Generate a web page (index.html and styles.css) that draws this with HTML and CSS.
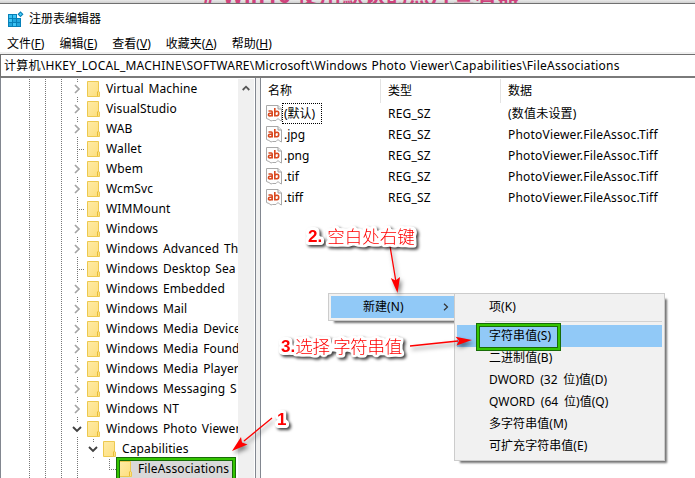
FILE: index.html
```html
<!DOCTYPE html>
<html lang="zh-CN">
<head>
<meta charset="utf-8">
<title>注册表编辑器</title>
<link rel="stylesheet" href="styles.css">
</head>
<body>
<svg class="defs" width="0" height="0" aria-hidden="true">
  <filter id="outline" x="-10" y="-10" width="160" height="44" filterUnits="userSpaceOnUse" color-interpolation-filters="sRGB">
    <feMorphology in="SourceAlpha" operator="dilate" radius="2"/>
    <feGaussianBlur stdDeviation="1"/>
    <feColorMatrix values="0 0 0 0 1  0 0 0 0 1  0 0 0 0 1  0 0 0 5 -.6" result="halo"/>
    <feMerge><feMergeNode in="halo"/><feMergeNode in="SourceGraphic"/></feMerge>
  </filter>
  <linearGradient id="fold" x1="0" y1="0" x2="1" y2="1"><stop offset="0" stop-color="#ffeba6"/><stop offset="1" stop-color="#fddf7c"/></linearGradient>
  <symbol id="folder" viewBox="0 0 13 16"><path d="M.5.5h11v10l1 .5v4.500H.5z" fill="url(#fold)" stroke="#edc94f"/><path d="M10.500 15v-4l1-1" fill="none" stroke="#e7bd38"/></symbol>
  <symbol id="right" viewBox="0 0 8 10"><path d="M2 1l4 4-4 4" fill="none" stroke="#a3a3a3" stroke-width="1.700"/></symbol>
  <symbol id="down" viewBox="0 0 10 8"><path d="M1 2l4 4 4-4" fill="none" stroke="#404040" stroke-width="1.900"/></symbol>
  <symbol id="ab" viewBox="0 0 16 17"><path d="M.5.500H12l3.500 3.500v12l-2-1-1.500-1.500-2 2H6.500L5 16l-2-1.500-2.500-1z" fill="#fdfdfd" stroke="#a9a9a9"/><path d="M12 .5V4h3.500" fill="#eee" stroke="#a0a0a0"/><g fill="none" stroke="#d9481f" stroke-width="1.600"><path d="M2.500 6h2.700q1 0 1 1v4.500M6 8.300H4q-1.500 0-1.500 1.400T4 11q1.200 0 2-1"/><path d="M8.800 3v8.500M9 7.300q.8-1 2-1 1.700 0 1.700 2.200T11 10.800q-1.200 0-2-.7"/></g></symbol>
</svg>
<div class="backdrop"><span># Win10 使用默认的照片查看器</span></div>
<div class="window">
  <header class="titlebar">
    <svg width="16" height="17" viewBox="0 0 16 17"><path d="M0 3h9v4h4v9H0z" fill="#0780b8"/><path d="M1 4h3v3H1zM5 4h3v3H5zM1 8h3v3H1zM5 12h3v3H5z" fill="#3ec4f4"/><path d="M5 8h3v3H5zM9 8h3v3H9zM1 12h3v3H1zM9 12h3v3H9z" fill="#22a6dd"/><path d="M12.500.2l3 3-3 3-3-3z" fill="#087eb5"/><path d="M12.500 1.800l1.500 1.500-1.500 1.500L11 3.300z" fill="#4bd0fa"/></svg>
    <span>注册表编辑器</span>
  </header>
  <nav class="menubar"><span>文件(<u>F</u>)</span><span>编辑(<u>E</u>)</span><span>查看(<u>V</u>)</span><span>收藏夹(<u>A</u>)</span><span>帮助(<u>H</u>)</span></nav>
  <div class="address"><span>计算机\HKEY_LOCAL_MACHINE\SOFTWARE\Microsoft\Windows Photo Viewer\Capabilities\FileAssociations</span></div>
  <main class="panes">
    <section class="tree">
      <div class="rows">
        <div class="row"><i></i><i></i><i></i><b><svg class="r"><use href="#right"/></svg></b><svg class="f"><use href="#folder"/></svg><span>Virtual Machine</span></div>
        <div class="row"><i></i><i></i><i></i><b><svg class="r"><use href="#right"/></svg></b><svg class="f"><use href="#folder"/></svg><span>VisualStudio</span></div>
        <div class="row"><i></i><i></i><i></i><b><svg class="r"><use href="#right"/></svg></b><svg class="f"><use href="#folder"/></svg><span>WAB</span></div>
        <div class="row"><i></i><i></i><i></i><i class="tee"></i><svg class="f"><use href="#folder"/></svg><span>Wallet</span></div>
        <div class="row"><i></i><i></i><i></i><b><svg class="r"><use href="#right"/></svg></b><svg class="f"><use href="#folder"/></svg><span>Wbem</span></div>
        <div class="row"><i></i><i></i><i></i><b><svg class="r"><use href="#right"/></svg></b><svg class="f"><use href="#folder"/></svg><span>WcmSvc</span></div>
        <div class="row"><i></i><i></i><i></i><i class="tee"></i><svg class="f"><use href="#folder"/></svg><span>WIMMount</span></div>
        <div class="row"><i></i><i></i><i></i><b><svg class="r"><use href="#right"/></svg></b><svg class="f"><use href="#folder"/></svg><span>Windows</span></div>
        <div class="row"><i></i><i></i><i></i><b><svg class="r"><use href="#right"/></svg></b><svg class="f"><use href="#folder"/></svg><span>Windows Advanced Th</span></div>
        <div class="row"><i></i><i></i><i></i><i class="tee"></i><svg class="f"><use href="#folder"/></svg><span>Windows Desktop Sea</span></div>
        <div class="row"><i></i><i></i><i></i><b><svg class="r"><use href="#right"/></svg></b><svg class="f"><use href="#folder"/></svg><span>Windows Embedded</span></div>
        <div class="row"><i></i><i></i><i></i><b><svg class="r"><use href="#right"/></svg></b><svg class="f"><use href="#folder"/></svg><span>Windows Mail</span></div>
        <div class="row"><i></i><i></i><i></i><b><svg class="r"><use href="#right"/></svg></b><svg class="f"><use href="#folder"/></svg><span>Windows Media Device</span></div>
        <div class="row"><i></i><i></i><i></i><b><svg class="r"><use href="#right"/></svg></b><svg class="f"><use href="#folder"/></svg><span>Windows Media Found</span></div>
        <div class="row"><i></i><i></i><i></i><b><svg class="r"><use href="#right"/></svg></b><svg class="f"><use href="#folder"/></svg><span>Windows Media Player</span></div>
        <div class="row"><i></i><i></i><i></i><b><svg class="r"><use href="#right"/></svg></b><svg class="f"><use href="#folder"/></svg><span>Windows Messaging S</span></div>
        <div class="row"><i></i><i></i><i></i><b><svg class="r"><use href="#right"/></svg></b><svg class="f"><use href="#folder"/></svg><span>Windows NT</span></div>
        <div class="row"><i></i><i></i><i></i><b><svg class="d"><use href="#down"/></svg></b><svg class="f"><use href="#folder"/></svg><span>Windows Photo Viewer</span></div>
        <div class="row"><i></i><i></i><i></i><i></i><b class="first"><svg class="d"><use href="#down"/></svg></b><svg class="f"><use href="#folder"/></svg><span>Capabilities</span></div>
        <div class="row selected"><i></i><i></i><i></i><i></i><i class="none"></i><i class="elbow"></i><svg class="f"><use href="#folder"/></svg><span>FileAssociations</span></div>
      </div>
      <div class="scroll"><svg width="8" height="6" viewBox="0 0 8 6"><path d="M.7 5L4 1.700 7.300 5" fill="none" stroke="#555" stroke-width="1.800"/></svg></div>
    </section>
    <section class="list">
      <div class="line head"><span>名称</span><span>类型</span><span>数据</span></div>
      <div class="line"><div class="name"><svg><use href="#ab"/></svg><span class="focus">(默认)</span></div><span>REG_SZ</span><span>(数值未设置)</span></div>
      <div class="line"><div class="name"><svg><use href="#ab"/></svg><span>.jpg</span></div><span>REG_SZ</span><span>PhotoViewer.FileAssoc.Tiff</span></div>
      <div class="line"><div class="name"><svg><use href="#ab"/></svg><span>.png</span></div><span>REG_SZ</span><span>PhotoViewer.FileAssoc.Tiff</span></div>
      <div class="line"><div class="name"><svg><use href="#ab"/></svg><span>.tif</span></div><span>REG_SZ</span><span>PhotoViewer.FileAssoc.Tiff</span></div>
      <div class="line"><div class="name"><svg><use href="#ab"/></svg><span>.tiff</span></div><span>REG_SZ</span><span>PhotoViewer.FileAssoc.Tiff</span></div>
    </section>
  </main>
</div>
<div class="popup parent"><div class="item active"><span>新建(N)</span><svg width="6" height="8" viewBox="0 0 6 8"><path d="M1 .7L4.500 4 1 7.300" fill="none" stroke="#333" stroke-width="1.200"/></svg></div></div>
<div class="popup sub">
  <div class="item">项(K)</div>
  <hr>
  <div class="item active">字符串值(S)</div>
  <div class="item">二进制值(B)</div>
  <div class="item">DWORD (32 位)值(D)</div>
  <div class="item">QWORD (64 位)值(Q)</div>
  <div class="item">多字符串值(M)</div>
  <div class="item">可扩充字符串值(E)</div>
</div>
<div class="mark mark-key"></div>
<div class="mark mark-item"></div>
<svg class="arrows" width="695" height="478" viewBox="0 0 695 478">
  <g fill="#f00" stroke="#f00"><path d="M390 246l6 36M410 346l48-5M272 418l-28 23" fill="none" stroke-width="1.300"/><path stroke="none" d="M397.500 293l-6.700-15 4.700 2.500 4.500-3.500zM472 340l-15.500 5.500 2.500-4.700-3.500-4zM232 451l9-14 1 5.500 5.500 2z"/></g>
</svg>
<div class="note n1"><b>1</b></div>
<div class="note n2"><b>2.</b><span>空白处右键</span></div>
<div class="note n3"><b>3.</b><span>选择 字符串值</span></div>
</body>
</html>
```
FILE: styles.css
```css
* { box-sizing: border-box; }
body {
  margin: 0; width: 695px; height: 478px; overflow: hidden; position: relative;
  display: flex; flex-direction: column; background: #fff; color: #000;
  font: 12px/20px "Noto Sans", "Noto Sans CJK SC", sans-serif;
  white-space: nowrap;
}
svg { display: block; flex: none; }
.defs { position: absolute; }
.backdrop { height: 3px; flex: none; overflow: hidden; background: linear-gradient(#e9e9e9, #cfcfcf); padding-left: 202px; }
.backdrop span { display: block; margin-top: -17px; font-size: 22px; font-weight: 700; line-height: 22px; letter-spacing: .25px; color: #cf437c; }
.window { flex: 1; min-height: 0; display: flex; flex-direction: column; border-top: 1px solid #707070; }
.titlebar { height: 29px; flex: none; display: flex; align-items: center; gap: 5px; padding: 1px 0 0 8px; }
.menubar { height: 21px; flex: none; display: flex; gap: 15px; padding: 1px 0 0 7px; }
.menubar u { text-underline-offset: 1px; }
.address { height: 24px; flex: none; border: 1px solid #6f6f6f; border-right: 0; border-bottom: 2px solid #7a7a7a; padding: 1px 0 0 3px; letter-spacing: .24px; word-spacing: .6px; box-shadow: 0 -2px #f0f0f0; }
.panes { flex: 1; min-height: 0; display: flex; gap: 4px; background: #f0f0f0; }
.tree { width: 256px; display: flex; background: #fff; border-left: 1px solid #828790; border-right: 1px solid #828790; padding-top: 1px; }
.rows { width: 237px; overflow: hidden; padding-left: 20px; letter-spacing: .13px; word-spacing: 1.500px; }
.row { height: 20px; display: flex; align-items: center; }
.row i, .row b { width: 16px; height: 20px; flex: none; }
.row i { background: repeating-linear-gradient(#777 0 1px, transparent 1px 2px) 8px 0 / 1px 20px no-repeat; }
.row i.tee { background: repeating-linear-gradient(#777 0 1px, transparent 1px 2px) 8px 0 / 1px 20px no-repeat, repeating-linear-gradient(90deg, #777 0 1px, transparent 1px 2px) 8px 10px / 7px 1px no-repeat; }
.row i.elbow { background: repeating-linear-gradient(#777 0 1px, transparent 1px 2px) 8px 0 / 1px 11px no-repeat, repeating-linear-gradient(90deg, #777 0 1px, transparent 1px 2px) 8px 10px / 7px 1px no-repeat; }
.row i.none { background: none; }
.row b { display: flex; align-items: center; justify-content: center; background: linear-gradient(#777, #777) 8px 0 / 1px 1px no-repeat, linear-gradient(#777, #777) 8px 2px / 1px 1px no-repeat, linear-gradient(#777, #777) 8px 18px / 1px 1px no-repeat; }
.row .r { width: 8px; height: 10px; }
.row .d { width: 10px; height: 8px; }
.row .f { width: 13px; height: 16px; margin: 0 0 0 2px; }
.row span { padding-left: 6px; }
.selected span { align-self: stretch; }
.row.selected { background: linear-gradient(#d9d9d9, #d9d9d9) 98px 0 / 116px 20px no-repeat; }
.scroll { width: 16px; background: #f0f0f0; padding: 6px 0 0 4px; }
.list { flex: 1; background: #fff; border-left: 1px solid #828790; padding-top: 1px; letter-spacing: .2px; }
.line { display: grid; grid-template-columns: 120px 120px 1fr; height: 21px; align-items: center; }
.line > span { padding-left: 7px; }
.head { height: 24px; letter-spacing: 0; }
.head span { height: 24px; line-height: 23px; border-right: 1px solid #e3e3e3; }
.head span:last-child { border: 0; }
.name { display: flex; align-items: center; padding-left: 5px; letter-spacing: 0; }
.name svg { width: 16px; height: 17px; }
.name span { padding: 0 2px; line-height: 21px; }
.name .focus { border: 1px dotted #000; width: 40px; height: 21px; padding: 0 1px; line-height: 19px; }
.popup { position: absolute; background: #f1f1f1; border: 1px solid #ccc; padding: 2px; box-shadow: 4px 4px 2px -2px rgba(0,0,0,.55); }
.item { height: 22px; line-height: 22px; padding-left: 32px; letter-spacing: .05px; word-spacing: 2.500px; }
.active { background: #91c9f7; }
.parent { left: 328px; top: 293px; width: 127px; height: 28px; padding-right: 0; }
.parent .item { display: flex; align-items: center; justify-content: space-between; padding-right: 5px; }
.sub { left: 454px; top: 293px; width: 211px; height: 168px; }
.sub hr { margin: 3px 0 3px 28px; border: 0; height: 1px; background: #d2d2d2; }
.mark { position: absolute; border: 1px solid #176c08; box-shadow: inset 0 0 0 1px #34c400, inset 0 0 0 2px #34c400, inset 0 0 0 3px #176c08; }
.mark-key { left: 116px; top: 457px; width: 120px; height: 26px; }
.mark-item { left: 476px; top: 323px; width: 85px; height: 28px; }
.arrows { position: absolute; left: 0; top: 0; filter: drop-shadow(2px 3px 2px rgba(0,0,0,.5)); }
.note { position: absolute; color: #f00; display: flex; align-items: center; height: 22px; line-height: 22px; font-size: 17.500px; filter: url(#outline) drop-shadow(2px 2px 1.500px rgba(0,0,0,.75)); }
.note b { font: 700 17px/22px "Liberation Sans", sans-serif; padding-top: 1px; }
.note span { font-family: "Noto Sans CJK SC", sans-serif; font-weight: 300; }
.n1 { left: 277px; top: 408px; }
.n2 { left: 308px; top: 225px; gap: 5px; }
.n3 { left: 281px; top: 335px; }
.n3 span { letter-spacing: -.3px; }
```
